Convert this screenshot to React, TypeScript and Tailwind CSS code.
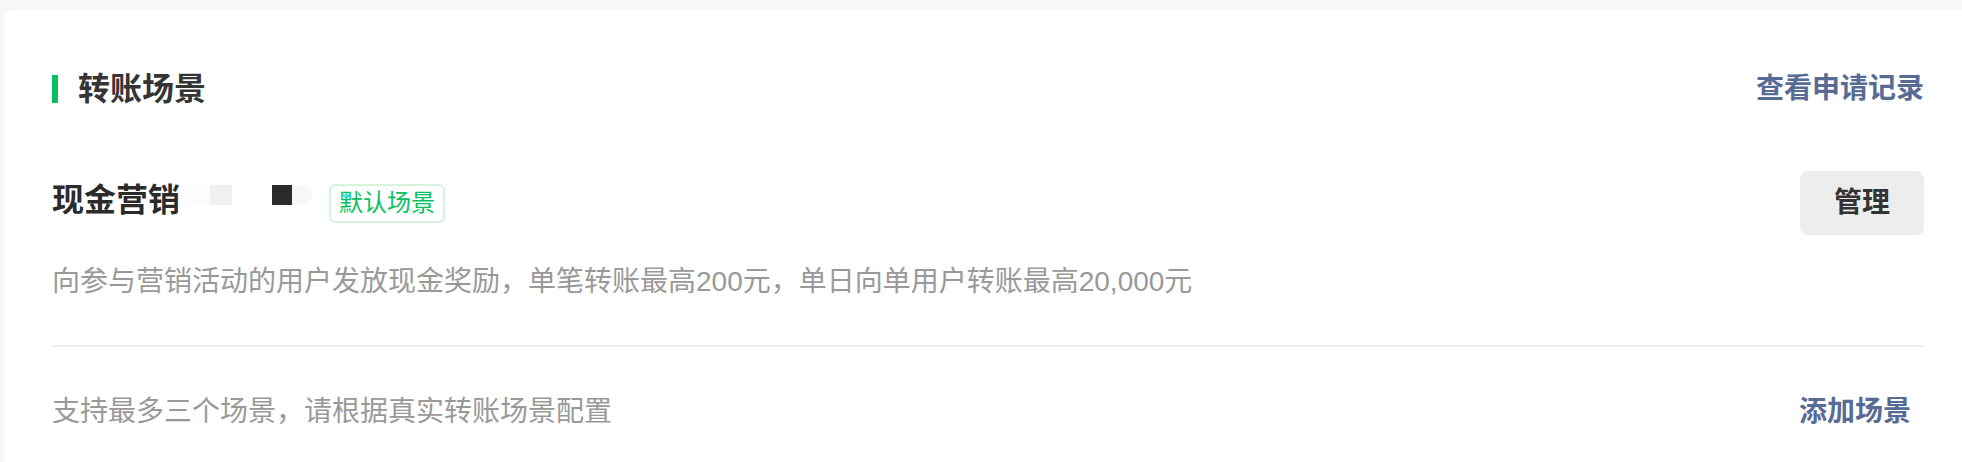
export default function App() {
  return (
    <div
      className="w-[1962px] h-[462px] overflow-hidden bg-[#f7f7f7] pt-[10px] pl-[4px]"
      style={{ fontFamily: '"Liberation Sans", "Noto Sans CJK SC", sans-serif' }}
    >
      {/* Card */}
      <div className="w-[1968px] h-[480px] bg-white rounded-[10px] px-12 pt-[57px]">
        {/* Header */}
        <div className="h-[44px] flex items-center justify-between">
          <div className="flex items-center gap-5">
            <div className="w-[6px] h-[28px] bg-[#07c160]" />
            <span className="text-[32px] leading-[44px] font-semibold text-[#353535]">转账场景</span>
          </div>
          <a className="text-[28px] leading-[44px] font-semibold text-[#576b95]">查看申请记录</a>
        </div>

        {/* Scene row */}
        <div className="mt-[60px] h-[64px] flex items-center justify-between">
          <div className="flex items-center">
            <span className="text-[32px] leading-[44px] font-bold text-[#2b2b2b] mb-[6px]">现金营销</span>
            <div className="ml-[9px] mb-[16px] flex h-[20px]">
              <div className="w-[21px] bg-[#fcfcfc] rounded-l-full" />
              <div className="w-[22px] bg-[#f0f0f0]" />
              <div className="w-[40px]" />
              <div className="w-[20px] bg-[#2b2b2b]" />
              <div className="w-[20px] bg-[#f7f7f7] rounded-r-full" />
            </div>
            <span className="ml-[17px] h-[39px] px-[8px] flex items-center rounded-[6px] border-2 border-[#d6f3de] text-[24px] text-[#07c160]">
              默认场景
            </span>
          </div>
          <button className="w-[124px] h-[64px] rounded-[8px] bg-[#ededed] text-[28px] font-semibold text-[#333]">
            管理
          </button>
        </div>

        {/* Description */}
        <p className="mt-[27px] text-[28px] leading-[40px] text-[#999]">
          向参与营销活动的用户发放现金奖励，单笔转账最高200元，单日向单用户转账最高20,000元
        </p>

        <div className="mt-[43px] h-[2px] bg-[#eeeeee]" />

        {/* Footer */}
        <div className="mt-[45px] h-[40px] flex items-center justify-between">
          <span className="text-[28px] leading-[40px] text-[#999]">支持最多三个场景，请根据真实转账场景配置</span>
          <a className="mr-[13px] text-[28px] leading-[40px] font-semibold text-[#576b95]">添加场景</a>
        </div>
      </div>
    </div>
  );
}
